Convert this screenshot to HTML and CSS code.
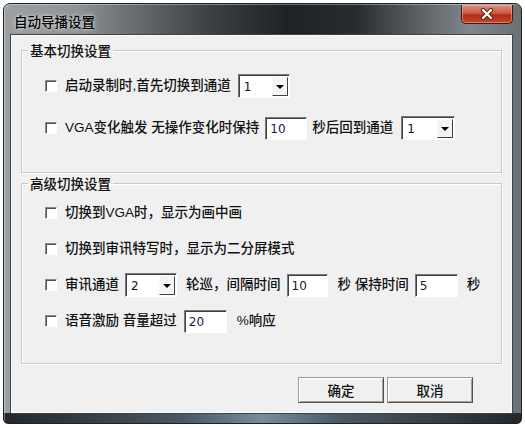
FILE: index.html
```html
<!DOCTYPE html>
<html lang="zh-CN">
<head>
<meta charset="utf-8">
<title>自动导播设置</title>
<link rel="stylesheet" href="styles.css">
</head>
<body>
<div class="window">
  <div class="titlebar">
    <span class="title">自动导播设置</span>
    <span class="close" aria-label="关闭">
      <svg width="16" height="12" viewBox="0 0 16 12">
        <path d="M4 2 L12 10 M12 2 L4 10" stroke="#4a1a10" stroke-width="4" stroke-linecap="round"/>
        <path d="M4 2 L12 10 M12 2 L4 10" stroke="#ffffff" stroke-width="2.4" stroke-linecap="round"/>
      </svg>
    </span>
  </div>
  <div class="client">
    <fieldset class="group g1">
      <legend>基本切换设置</legend>
      <div class="row">
        <span class="cb"></span>
        <span class="lbl">启动录制时,首先切换到通道</span>
        <span class="combo c52 ml7"><span class="val">1</span><span class="drop"><span class="tri"></span></span></span>
      </div>
      <div class="row">
        <span class="cb"></span>
        <span class="lbl">VGA变化触发 无操作变化时保持</span>
        <span class="edit e42 ml6">10</span>
        <span class="lbl ml5">秒后回到通道</span>
        <span class="combo c54 ml8"><span class="val">1</span><span class="drop"><span class="tri"></span></span></span>
      </div>
    </fieldset>
    <fieldset class="group g2">
      <legend>高级切换设置</legend>
      <div class="row">
        <span class="cb"></span>
        <span class="lbl">切换到VGA时，显示为画中画</span>
      </div>
      <div class="row">
        <span class="cb"></span>
        <span class="lbl">切换到审讯特写时，显示为二分屏模式</span>
      </div>
      <div class="row">
        <span class="cb"></span>
        <span class="lbl">审讯通道</span>
        <span class="combo c52 ml6"><span class="val">2</span><span class="drop"><span class="tri"></span></span></span>
        <span class="lbl ml9">轮巡，间隔时间</span>
        <span class="edit e41 ml6">10</span>
        <span class="lbl ml10">秒 保持时间</span>
        <span class="edit e43 ml6">5</span>
        <span class="lbl ml9">秒</span>
      </div>
      <div class="row">
        <span class="cb"></span>
        <span class="lbl">语音激励 音量超过</span>
        <span class="edit e43 ml7">20</span>
        <span class="lbl ml10">%响应</span>
      </div>
    </fieldset>
    <div class="buttons">
      <button class="btn">确定</button>
      <button class="btn">取消</button>
    </div>
  </div>
</div>
</body>
</html>
```

FILE: styles.css
```css
* { box-sizing: border-box; }
html, body { margin: 0; padding: 0; background: #ffffff; }
body {
  font-family: "Liberation Sans", "Noto Sans CJK SC", sans-serif;
  font-size: 13.5px;
  font-weight: 500;
  color: #111;
}
.window {
  margin: 3px 0 0 3px;
  width: 519px;
  height: 421px;
  border: 1px solid #1e2226;
  border-radius: 7px 7px 5px 5px;
  padding: 0 9px 10px 7px;
  display: flex;
  flex-direction: column;
  background:
    linear-gradient(90deg, #22282c 0%, #4a5864 35%, #7a8c9a 50%, #4a5864 65%, #22282c 100%) bottom / 100% 10px no-repeat,
    linear-gradient(90deg, #9ca0a2 0%, #8e9396 14%, #6a7074 24%, #3a4044 40%, #1c2226 55%, #262c30 68%, #5a6064 80%, #80868a 90%, #6a7074 100%);
  box-shadow: inset 1px 1px 0 rgba(255,255,255,0.35);
}
.titlebar {
  height: 31px;
  display: flex;
  align-items: flex-start;
  justify-content: space-between;
}
.title {
  margin: 7px 0 0 3px;
  font-family: "Noto Sans CJK SC", sans-serif;
  font-size: 13.5px;
  color: #000;
  text-shadow: 0 0 5px rgba(255,255,255,0.7), 0 0 2px rgba(255,255,255,0.6);
}
.close {
  width: 52px;
  height: 19px;
  margin: 1px -1px 0 0;
  border: 1px solid #3a1a14;
  border-top: none;
  border-radius: 0 0 5px 5px;
  background: linear-gradient(180deg, #e0907c 0%, #cc5a44 45%, #b42c16 55%, #c4452c 100%);
  box-shadow: inset 0 0 0 1px rgba(255,200,180,0.45);
  display: flex;
  align-items: center;
  justify-content: center;
}
.close svg { display: block; }
.client {
  flex: 1;
  background: #f0f0f0;
  border: 1px solid #fafafa;
  box-shadow: 0 0 0 1px #3c4448;
  padding: 0 9px 0 9px;
  display: flex;
  flex-direction: column;
}
.group {
  margin: 0;
  border: 1px solid #c8c8c8;
  box-shadow: 1px 1px 0 #fff, inset 1px 1px 0 #fff;
  padding: 0 0 0 23px;
  min-width: 0;
}
.group legend {
  padding: 0 2px;
  margin-left: -17px;
  line-height: 16px;
  font-family: "Noto Sans CJK SC", sans-serif;
}
.g1 { margin-top: 6px; padding-top: 16px; padding-bottom: 32px; }
.g1 .row + .row { margin-top: 18px; }
.g2 { margin-top: 2px; padding-top: 10px; padding-bottom: 30px; }
.g2 .row + .row { margin-top: 12px; }
.row {
  height: 24px;
  display: flex;
  align-items: center;
  white-space: nowrap;
}
.cb {
  width: 12px;
  height: 12px;
  flex: none;
  background: #fff;
  border: 1px solid;
  border-color: #8a8a8a #ffffff #ffffff #8a8a8a;
  box-shadow: inset 1px 1px 0 #505050;
  margin-right: 8px;
}
.lbl { line-height: 16px; }
.ml5 { margin-left: 5px; }
.ml6 { margin-left: 6px; }
.ml7 { margin-left: 7px; }
.ml8 { margin-left: 8px; }
.ml9 { margin-left: 9px; }
.ml10 { margin-left: 10px; }
.edit {
  height: 23px;
  flex: none;
  background: #fff;
  border: 1px solid;
  border-color: #7a7a7a #ffffff #ffffff #7a7a7a;
  box-shadow: inset 1px 1px 0 #404040;
  padding: 3px 0 0 4px;
  font-family: "DejaVu Sans", sans-serif;
  font-size: 12px;
  font-weight: normal;
  line-height: 16px;
  color: #1a1a40;
}
.e41 { width: 41px; }
.e42 { width: 42px; }
.e43 { width: 43px; }
.combo {
  height: 24px;
  flex: none;
  background: #fff;
  border: 1px solid;
  border-color: #7a7a7a #ffffff #ffffff #7a7a7a;
  box-shadow: inset 1px 1px 0 #404040;
  display: flex;
  padding: 2px 1px 1px 2px;
}
.c52 { width: 52px; }
.c54 { width: 54px; }
.combo .val {
  flex: 1;
  padding: 2px 0 0 3px;
  font-family: "DejaVu Sans", sans-serif;
  font-size: 12px;
  font-weight: normal;
  line-height: 16px;
  color: #111;
}
.combo .drop {
  width: 16px;
  flex: none;
  background: #f4f4f4;
  border: 1px solid;
  border-color: #f8f8f8 #404040 #404040 #f8f8f8;
  display: flex;
  align-items: center;
  justify-content: center;
}
.tri {
  width: 0;
  height: 0;
  border-left: 4px solid transparent;
  border-right: 4px solid transparent;
  border-top: 4px solid #000;
}
.buttons {
  margin-top: 13px;
  padding-right: 29px;
  display: flex;
  justify-content: flex-end;
  gap: 3px;
}
.btn {
  width: 86px;
  height: 26px;
  margin: 0;
  padding: 0;
  background: #f0f0f0;
  border: 1px solid #6a6a6a;
  border-color: #9a9a9a #505050 #505050 #9a9a9a;
  box-shadow: inset 1px 1px 0 #fff, inset -1px -1px 0 #a0a0a0;
  font-family: "Noto Sans CJK SC", sans-serif;
  font-size: 13.5px;
  font-weight: 500;
  color: #111;
}
```
